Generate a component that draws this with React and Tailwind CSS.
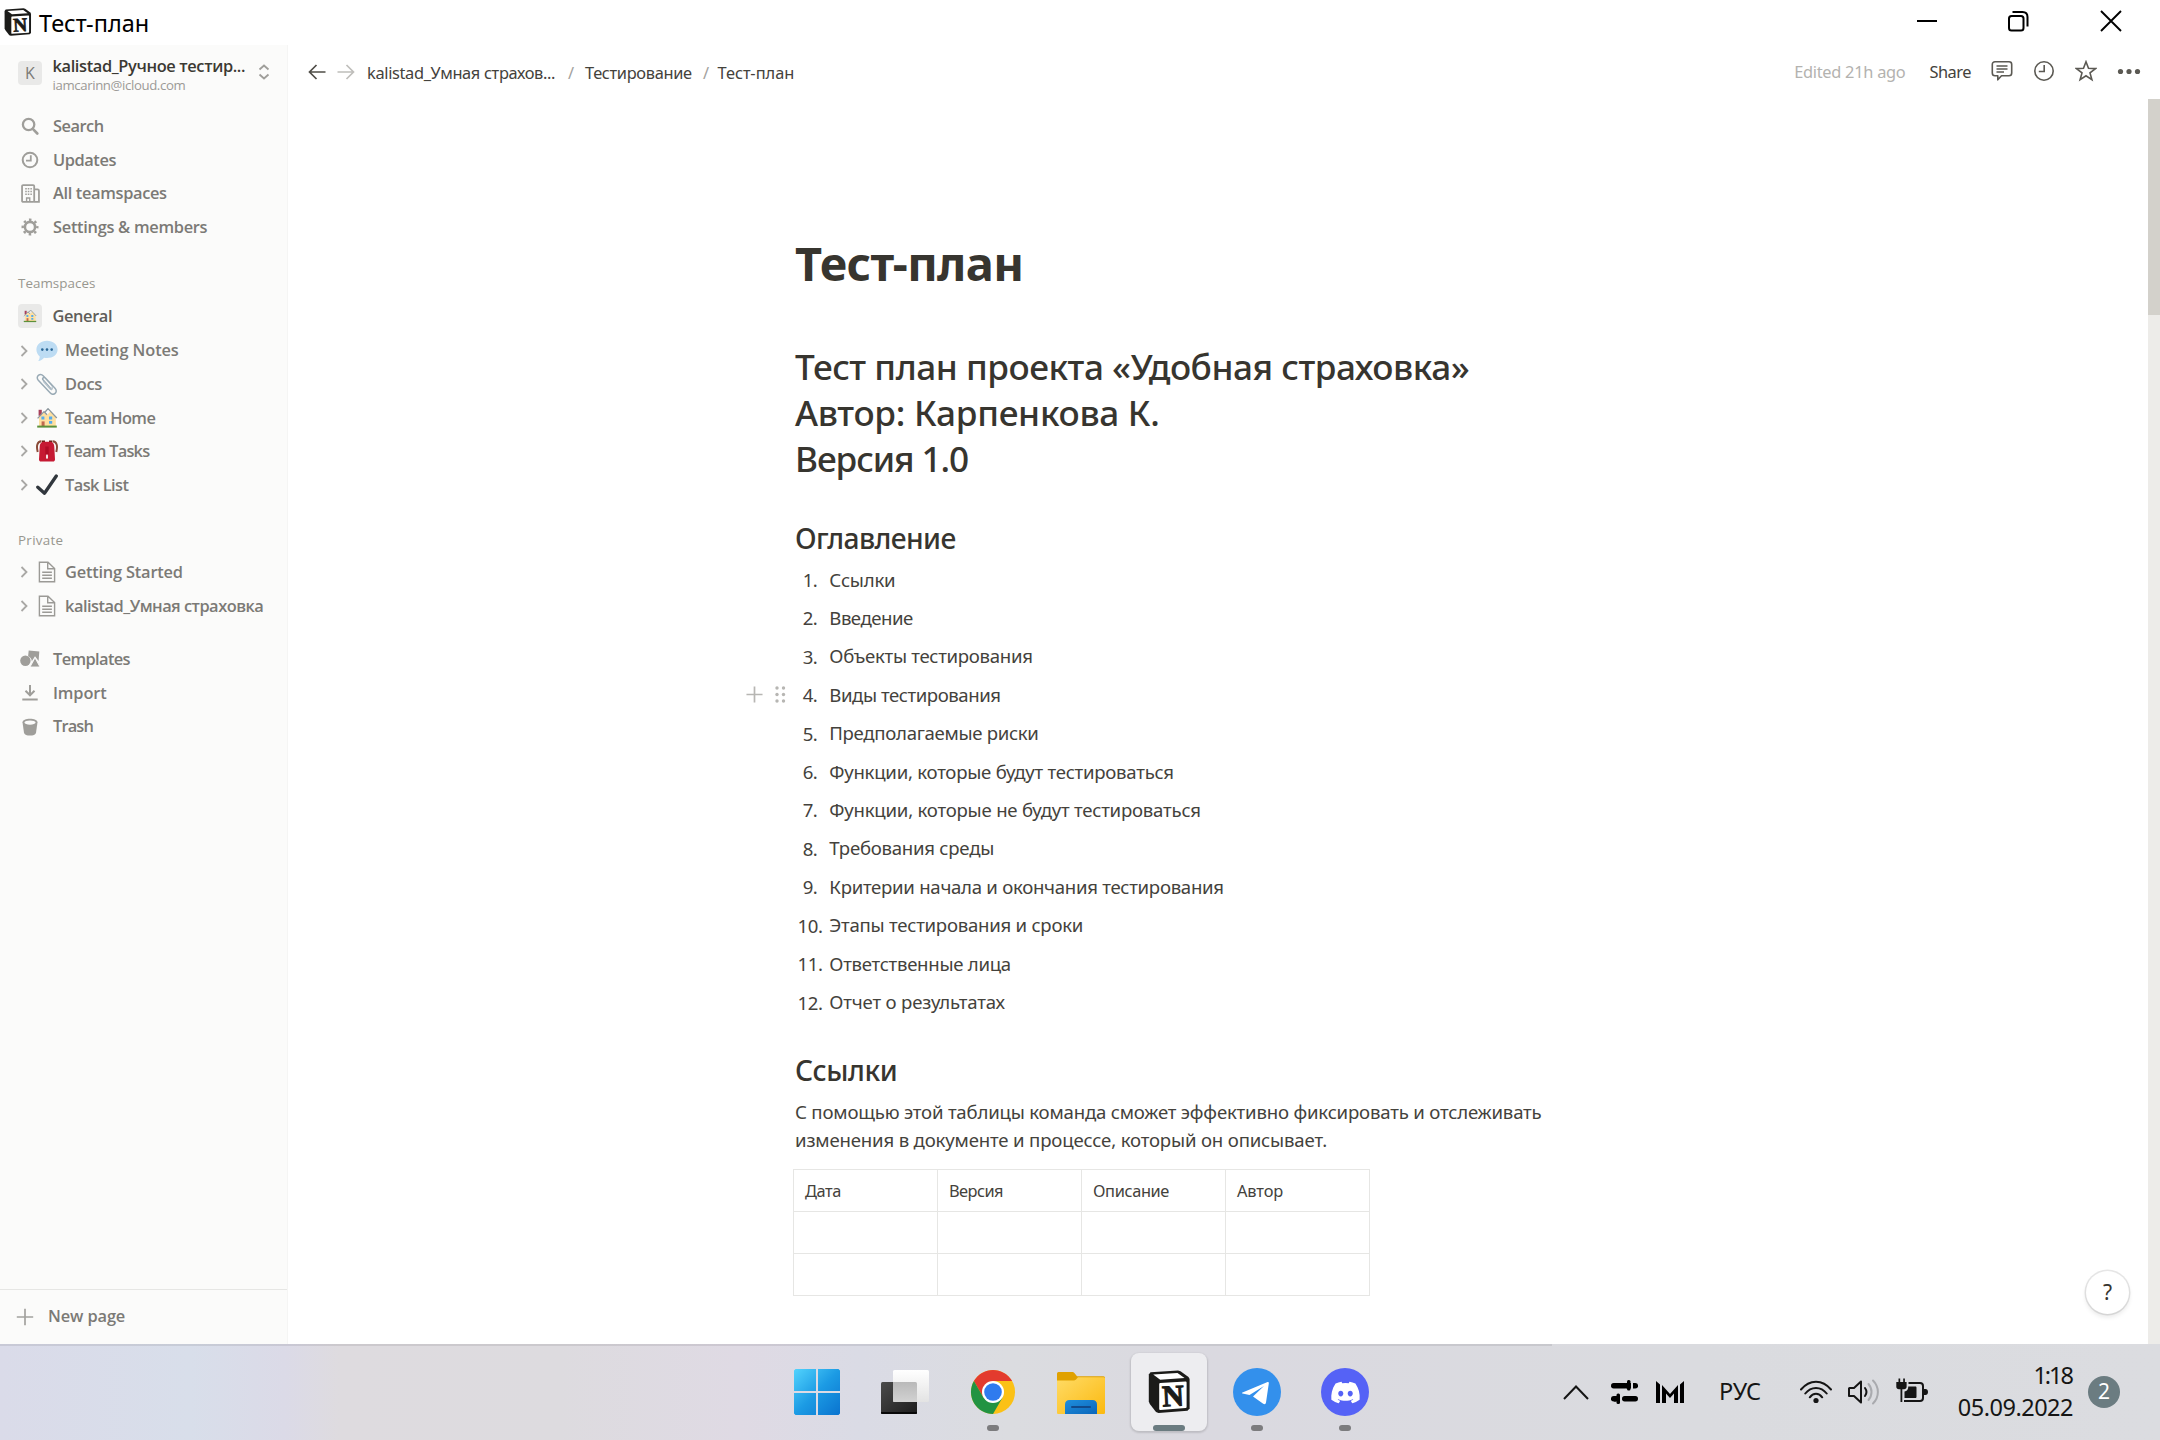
import React from 'react';
import { FaDiscord } from 'react-icons/fa';

function Notion({ className }) {
  return (
    <svg viewBox="0 0 43 44" className={className}>
      <path d="M2.500 2.200L30 .4 32.500 1.200 40.500 7 41.600 9V38.500L39.500 40.700 10.500 43 8 42 1.800 34 .8 31.500V4.500z" fill="#1b1b19" strokeLinejoin="round" />
      <path d="M5.200 4.600L29.500 3 36.500 8 12.200 9.800z" fill="#fff" />
      <path d="M11.200 14.200Q11.200 13.200 12.200 13.100L37.500 11.400Q38.600 11.300 38.600 12.400V37Q38.600 38 37.600 38.100L12.400 39.900Q11.200 40 11.200 38.900z" fill="#fff" />
      <text x="25" y="36" textAnchor="middle" fontFamily="Liberation Serif, serif" fontWeight="700" fontSize="30" fill="#1b1b19" stroke="#1b1b19" strokeWidth="1.100" transform="rotate(-3 25 26)">N</text>
    </svg>
  );
}

function House({ className }) {
  return (
    <svg viewBox="0 0 22 22" className={className}>
      <path d="M2.600 2.800h3.200v6H2.600z" fill="#a8405a" />
      <path d="M3 10.500L8 5l3 3 3.800-4 5 6.500V19H3z" fill="#ffe0a0" />
      <path d="M1.600 11.400L8 4.600l3 3.200M7.600 5h1.500L12 1.600 20.800 11" fill="none" stroke="#8d989e" strokeWidth="1.300" strokeLinejoin="round" />
      <path d="M5.400 9.600h3v3h-3zM13 9.400h3.200v3H13zM13 14h3.200v2.800H13z" fill="#55acee" />
      <path d="M5.600 14.400h3V19h-3z" fill="#c1694f" />
      <path d="M1.200 18.600h19.600v2H1.200z" fill="#5c913b" />
    </svg>
  );
}

const emoji = {
  chat: (
    <svg viewBox="0 0 22 22" className="size-[22px]">
      <path d="M11 .8c6 0 10.600 3.700 10.600 8.700S17 18 11 18c-1 0-2 0-3-.3C6.600 19.600 4.600 20.800 2.200 21c1-1.400 1.500-3 1.500-4.600C1.600 14.700.4 12.300.4 9.500.4 4.500 5 .8 11 .8z" fill="#bddcf3" />
      <circle cx="6.300" cy="9.600" r="1.300" fill="#2a6797" />
      <circle cx="11" cy="9.600" r="1.300" fill="#2a6797" />
      <circle cx="15.700" cy="9.600" r="1.300" fill="#2a6797" />
    </svg>
  ),
  clip: (
    <svg viewBox="0 0 22 22" className="size-[22px]" fill="none" strokeLinecap="round">
      <path d="M15.500 16.500L7 6.800C5.700 5.400 8 3.500 9.400 5l9.800 10.600c3.200 3.600-1.800 7.600-4.900 4.300L2.300 7.200C-.9 3.600 4 -.6 7.400 3L17 13.500" stroke="#99aab5" strokeWidth="1.500" />
      <path d="M7.500 8.500l6.500 7.400c1.300 1.500 3.200-.3 2-1.700" stroke="#b6c3cc" strokeWidth="1.300" />
    </svg>
  ),
  house: <House className="size-[22px]" />,
  pack: (
    <svg viewBox="0 0 22 22" className="size-[22px]">
      <path d="M5.500 1.300C1 1.600.2 6 1.700 12M16.500 1.300c4.500.3 5.300 4.700 3.800 10.700" fill="none" stroke="#8a4b38" strokeWidth="2" />
      <path d="M6 .6h3v4H6zM13 .6h3v4h-3z" fill="#662113" />
      <path d="M8 1.800h6c3 0 4.200 2 4.300 5L19 19.500c0 1.300-.8 2.100-2 2.100H5c-1.200 0-2-.8-2-2.100L3.700 6.800c.1-3 1.300-5 4.300-5z" fill="#c61a33" />
      <path d="M9.300 6.500h3.400v8H9.300z" fill="#a0041e" opacity=".6" />
      <rect x="10" y="14.500" width="2" height="4.300" rx=".8" fill="#f4e4e6" />
    </svg>
  ),
  check: (
    <svg viewBox="0 0 22 22" className="size-[22px]">
      <path d="M1.800 13.200L8.500 19.200 20.300 2" fill="none" stroke="#31373d" strokeWidth="3.300" strokeLinecap="round" strokeLinejoin="round" />
    </svg>
  ),
  page: (
    <svg viewBox="0 0 22 22" className="size-[22px]" fill="none" stroke="#9b9a96" strokeWidth="1.400">
      <path d="M3.400 1.200H12L18.600 7.500V20.800H3.400zM11.700 1.500V7.800H18.300" />
      <path d="M6.200 11.200h9.700M6.200 14.200h9.700M6.200 17.200h9.700" />
    </svg>
  ),
};

const icons = {
  search: (
    <svg viewBox="0 0 18 18" className="size-[18px]" fill="none" stroke="#9f9e9a" strokeWidth="2.300" strokeLinecap="round">
      <circle cx="7.600" cy="7.500" r="5.700" />
      <path d="M11.800 11.900L16.300 16.500" strokeWidth="2.600" />
    </svg>
  ),
  clock: (
    <svg viewBox="0 0 18 18" className="size-[18px]" fill="none" stroke="#9f9e9a" strokeWidth="2">
      <circle cx="9" cy="9" r="7.300" />
      <path d="M9.800 4.300V9.700H5" strokeWidth="1.800" />
    </svg>
  ),
  building: (
    <svg viewBox="0 0 18 18" className="size-[19px]" fill="none" stroke="#9f9e9a" strokeWidth="1.700">
      <rect x="1" y="1" width="11.500" height="16" rx="1" />
      <path d="M12.500 5h3.200c.8 0 1.300.5 1.300 1.300V17h-4.500" />
      <path d="M4 4.600h1.500M6.400 4.600H7.900M8.900 4.600h1.400M4 7.200h1.500M6.400 7.200H7.900M8.900 7.200h1.400M4 9.800h1.500M6.400 9.800H7.900M8.900 9.800h1.400" strokeWidth="1.400" />
      <path d="M5.300 16.500v-3.200h3v3.200" strokeWidth="1.300" />
    </svg>
  ),
  gear: (
    <svg viewBox="0 0 18 18" className="size-[18px]" fill="none" stroke="#9f9e9a">
      <circle cx="9" cy="9" r="5.100" strokeWidth="2.600" />
      <circle cx="9" cy="9" r="7.300" strokeWidth="2.400" strokeDasharray="2.500 3.233" strokeDashoffset="1.250" />
    </svg>
  ),
  templates: (
    <svg viewBox="0 0 20 18" className="h-[18px] w-[20px]" fill="#9f9e9a">
      <path d="M8.700.6L19.300 1.600 18.600 11 15 6.200 11.800 11.300A5.800 5.800 0 0 0 8.100 6.200z" />
      <circle cx="5.400" cy="10.800" r="5.200" />
      <path d="M15 7.800L20 17H10z" stroke="#fbfbfa" strokeWidth=".9" />
    </svg>
  ),
  import: (
    <svg viewBox="0 0 18 18" className="size-[18px]" fill="none" stroke="#9f9e9a" strokeWidth="2">
      <path d="M9 1v10M4.500 6.800L9 11.300l4.500-4.500M1.300 15.600H16.700" />
    </svg>
  ),
  trash: (
    <svg viewBox="0 0 18 18" className="size-[18px]">
      <path d="M1.500 4.300C1.500 2 5 .8 9 .8s7.500 1.200 7.500 3.500L15 14.700C14.700 16.700 12 17.500 9 17.500s-5.700-.8-6-2.800z" fill="#9f9e9a" />
      <ellipse cx="9" cy="4.600" rx="5.600" ry="2.100" fill="#fbfbfa" />
    </svg>
  ),
};

function NavRow({ icon, label, track }) {
  return (
    <div className="flex h-[33.600px] items-center pl-[18px]">
      <span className="flex w-6 justify-center">{icons[icon]}</span>
      <span className={`ml-[11px] text-[16.400px] font-[550] text-[#7b7a76] ${track}`}>{label}</span>
    </div>
  );
}

function PageRow({ icon, label, track }) {
  return (
    <div className="flex h-[33.600px] items-center pl-[20px]">
      <svg viewBox="0 0 8 12" className="h-3 w-2" fill="none" stroke="#a9a8a5" strokeWidth="1.800">
        <path d="M1.500 1l5 5-5 5" />
      </svg>
      <span className="ml-2">{emoji[icon]}</span>
      <span className={`ml-[7px] whitespace-nowrap text-[16.400px] font-[550] text-[#7b7a76] ${track}`}>{label}</span>
    </div>
  );
}

function Sidebar() {
  return (
    <aside className="flex w-[288px] shrink-0 flex-col border-r border-[#f5f5f4] bg-[#fbfbfa] font-['Open_Sans',sans-serif]">
      <div className="flex h-[64.500px] items-start pl-[18px]">
        <span className="mt-4 flex size-6 items-center justify-center rounded-[4px] bg-[#e9e9e8] text-[16px] font-medium text-[#7b7a76]">K</span>
        <div className="ml-[10.500px] mt-[10px] w-[196px]">
          <div className="h-[22px] whitespace-nowrap text-[16.400px] font-semibold leading-[22px] tracking-[-0.37px] text-[#3b3933]">kalistad_Ручное тестир...</div>
          <div className="text-[13.200px] leading-[17px] tracking-[-0.37px] text-[#9b9a97]">iamcarinn@icloud.com</div>
        </div>
        <svg viewBox="0 0 12 16" className="ml-[9.500px] mt-[19px] h-4 w-3" fill="none" stroke="#9f9e9a" strokeWidth="1.800">
          <path d="M1.500 5.500L6 1.500l4.500 4M1.500 10.500L6 14.500l4.500-4" />
        </svg>
      </div>
      <NavRow icon="search" label="Search" track="tracking-[-0.5px]" />
      <NavRow icon="clock" label="Updates" track="tracking-[-0.43px]" />
      <NavRow icon="building" label="All teamspaces" track="tracking-[-0.35px]" />
      <NavRow icon="gear" label="Settings & members" track="tracking-[-0.29px]" />
      <div className="mt-[23px] flex h-[31.500px] items-center pl-[18px] text-[13.400px] font-medium tracking-[0.03px] text-[#98978f]">Teamspaces</div>
      <div className="flex h-[35.500px] items-start pl-[18px] pt-[5.500px]">
        <span className="flex size-6 items-center justify-center rounded-[4px] bg-[#e9e9e8]"><House className="size-[14px]" /></span>
        <span className="ml-[10.500px] text-[16.400px] font-[550] leading-6 tracking-[-0.38px] text-[#5f5e59]">General</span>
      </div>
      <PageRow icon="chat" label="Meeting Notes" track="tracking-[-0.15px]" />
      <PageRow icon="clip" label="Docs" track="tracking-[-0.3px]" />
      <PageRow icon="house" label="Team Home" track="tracking-[-0.58px]" />
      <PageRow icon="pack" label="Team Tasks" track="tracking-[-0.78px]" />
      <PageRow icon="check" label="Task List" track="tracking-[-0.55px]" />
      <div className="mt-[22px] flex h-[31.600px] items-center pl-[18px] text-[13.400px] font-medium tracking-[0.3px] text-[#98978f]">Private</div>
      <PageRow icon="page" label="Getting Started" track="tracking-[-0.2px]" />
      <PageRow icon="page" label="kalistad_Умная страховка" track="tracking-[-0.5px]" />
      <div className="h-5" />
      <NavRow icon="templates" label="Templates" track="tracking-[-0.62px]" />
      <NavRow icon="import" label="Import" track="tracking-[-0.15px]" />
      <NavRow icon="trash" label="Trash" track="tracking-[-0.85px]" />
      <div className="mt-auto flex h-[55px] items-center border-t border-[#e6e6e4] pb-px pl-[16px]">
        <svg viewBox="0 0 18 18" className="size-[18px]" stroke="#a3a29e" strokeWidth="1.700">
          <path d="M9 .8v16.400M.8 9h16.400" />
        </svg>
        <span className="ml-[14px] text-[16.400px] font-[550] tracking-[-0.12px] text-[#7b7a76]">New page</span>
      </div>
    </aside>
  );
}

function TitleBar() {
  return (
    <header className="flex h-[45px] shrink-0 items-start bg-white">
      <Notion className="ml-[3.500px] mt-[7.500px] h-[28.500px] w-7" />
      <span className="ml-[7.500px] mt-[7px] text-[23.500px] leading-8 text-black">Тест-план</span>
      <div className="ml-auto mr-[38px] mt-[10px] flex">
        <svg viewBox="0 0 22 22" className="mr-[69px] size-[22px]" stroke="#000" strokeWidth="2"><path d="M1 11h20" /></svg>
        <svg viewBox="0 0 22 22" className="mr-[71px] size-[22px]" fill="none" stroke="#000" strokeWidth="2">
          <rect x="2" y="6" width="14.500" height="14.500" rx="2.500" />
          <path d="M5.500 2H15.500C18.500 2 20.500 4 20.500 7v9.500" />
        </svg>
        <svg viewBox="0 0 22 22" className="size-[22px]" stroke="#000" strokeWidth="1.900"><path d="M1 1l20 20M21 1L1 21" /></svg>
      </div>
    </header>
  );
}

function TopBar() {
  return (
    <div className="flex h-[54px] shrink-0 items-center pl-[20px] text-[16.400px] text-[#44423c]">
      <svg viewBox="0 0 18 16" className="h-4 w-[18px]" fill="none" stroke="#4f4d47" strokeWidth="1.700"><path d="M17.500 8H1.500M8.500 1L1.500 8l7 7" /></svg>
      <svg viewBox="0 0 18 16" className="ml-[11px] h-4 w-[18px]" fill="none" stroke="#bfbebb" strokeWidth="1.700"><path d="M.5 8h16M9.500 1l7 7-7 7" /></svg>
      <span className="ml-[12px] w-[201px] whitespace-nowrap pt-0.5 tracking-[-0.35px]">kalistad_Умная страхов...</span>
      <span className="w-[17px] pt-0.5 text-[#a3a29e]">/</span>
      <span className="w-[118px] pt-0.5 tracking-[-0.33px]">Тестирование</span>
      <span className="w-[14.500px] pt-0.5 text-[#a3a29e]">/</span>
      <span className="pt-0.5">Тест-план</span>
      <span className="ml-auto tracking-[-0.28px] text-[#b3b2af]">Edited 21h ago</span>
      <span className="ml-[24px] tracking-[-0.5px]">Share</span>
      <div className="ml-[20px] mr-[19px] flex items-center gap-5 pb-0.5">
        <svg viewBox="0 0 22 22" className="size-[22px]" fill="none" stroke="#5b5953" strokeWidth="1.600">
          <path d="M4 1.800h14c1.600 0 2.700 1 2.700 2.600v8.700c0 1.600-1.100 2.700-2.700 2.700H10.500L6.800 19.800V15.800H4c-1.600 0-2.700-1.100-2.700-2.700V4.400C1.300 2.800 2.400 1.800 4 1.800z" strokeLinejoin="round" />
          <path d="M5.500 6h11M5.500 9h11M5.500 12h7.500" strokeWidth="1.300" />
        </svg>
        <svg viewBox="0 0 22 22" className="size-[22px]" fill="none" stroke="#5b5953" strokeWidth="1.600">
          <circle cx="11" cy="11" r="9.200" />
          <path d="M11.200 5V11.500H5.800" />
        </svg>
        <svg viewBox="0 0 22 22" className="size-[22px]" fill="none" stroke="#5b5953" strokeWidth="1.600">
          <path d="M11 1.800l2.500 6.500 7 .3-5.500 4.300 1.900 6.800L11 15.800l-5.900 3.900L7 12.900 1.500 8.600l7-.3z" />
        </svg>
        <svg viewBox="0 0 24 22" className="h-[22px] w-6" fill="#5b5953">
          <circle cx="3.500" cy="11.500" r="2.600" /><circle cx="12" cy="11.500" r="2.600" /><circle cx="20.500" cy="11.500" r="2.600" />
        </svg>
      </div>
    </div>
  );
}

const items = [
  ['Ссылки', 'tracking-[-0.25px]'],
  ['Введение', 'tracking-[-0.5px]'],
  ['Объекты тестирования', 'tracking-[-0.3px]'],
  ['Виды тестирования', 'tracking-[-0.44px]'],
  ['Предполагаемые риски', 'tracking-[-0.31px]'],
  ['Функции, которые будут тестироваться', 'tracking-[-0.25px]'],
  ['Функции, которые не будут тестироваться', 'tracking-[-0.22px]'],
  ['Требования среды', 'tracking-[-0.25px]'],
  ['Критерии начала и окончания тестирования', 'tracking-[-0.28px]'],
  ['Этапы тестирования и сроки', 'tracking-[-0.25px]'],
  ['Ответственные лица', 'tracking-[-0.28px]'],
  ['Отчет о результатах', 'tracking-[-0.18px]'],
];

const columns = [
  ['Дата', 'tracking-[-0.41px]'],
  ['Версия', 'tracking-[-0.58px]'],
  ['Описание', 'tracking-[-0.38px]'],
  ['Автор', 'tracking-[-0.12px]'],
];

function Document() {
  return (
    <article className="flex-1 pl-[507px] pt-[134px] text-[#37352f]">
      <h1 className="h-[60px] text-[47px] font-bold leading-[60px] tracking-[-0.6px]">Тест-план</h1>
      <div className="mt-[49.500px] text-[35.200px] font-[550] leading-[46px]">
        <div className="tracking-[-0.47px]">Тест план проекта «Удобная страховка»</div>
        <div className="tracking-[-0.27px]">Автор: Карпенкова К.</div>
        <div className="tracking-[-1.1px]">Версия 1.0</div>
      </div>
      <h2 className="mt-[37px] text-[28.200px] font-[550] leading-[40px] tracking-[-0.58px]">Оглавление</h2>
      <ol className="mt-[2.800px] text-[18.600px] text-[#44423c]">
        {items.map(([text, track], i) => (
          <li key={text} className="relative flex h-[38.420px] items-center">
            {i === 3 && (
              <span className="absolute -left-[49px] top-[10.500px] flex gap-[12px]">
                <svg viewBox="0 0 18 18" className="size-[17px]" stroke="#b7b6b3" strokeWidth="1.800"><path d="M9 .5v17M.5 9h17" /></svg>
                <svg viewBox="0 0 11 17" className="h-[17px] w-[11px]" fill="#b7b6b3">
                  <circle cx="2" cy="2" r="1.700" /><circle cx="8.500" cy="2" r="1.700" /><circle cx="2" cy="8.500" r="1.700" /><circle cx="8.500" cy="8.500" r="1.700" /><circle cx="2" cy="15" r="1.700" /><circle cx="8.500" cy="15" r="1.700" />
                </svg>
              </span>
            )}
            <span className="w-[30px] pt-px text-center tracking-[-0.5px]">{i + 1}.</span>
            <span className={`ml-[4.300px] ${track}`}>{text}</span>
          </li>
        ))}
      </ol>
      <h2 className="mt-[29px] text-[28.200px] font-[550] leading-[40px] tracking-[-0.45px]">Ссылки</h2>
      <div className="mt-[7.500px] text-[18.600px] leading-[28.200px] text-[#44423c]">
        <div className="tracking-[-0.19px]">С помощью этой таблицы команда сможет эффективно фиксировать и отслеживать</div>
        <div className="tracking-[-0.17px]">изменения в документе и процессе, который он описывает.</div>
      </div>
      <div className="-ml-[2px] mt-[14.500px] grid w-[577px] grid-cols-[144px_144px_144px_144px] border-l border-t border-[#e6e6e4] text-[16.400px] text-[#44423c]">
        {[0, 1, 2].map((row) =>
          columns.map(([name, track]) => (
            <div key={name + row} className={`flex h-[42px] items-center border-b border-r border-[#e6e6e4] pl-[11px] pt-[3px] ${track}`}>
              {row === 0 ? name : ''}
            </div>
          ))
        )}
      </div>
    </article>
  );
}

function Chrome() {
  return (
    <svg viewBox="0 0 48 48" className="size-[46px]">
      <circle cx="24" cy="24" r="23" fill="#fbc116" />
      <path d="M4.100 12.500A23 23 0 0 1 43.900 12.500H24L14 29.700z" fill="#e33b2e" />
      <path d="M4.100 12.500L14 29.700 34 29.700 24 47A23 23 0 0 1 4.100 12.500z" fill="#229342" />
      <circle cx="24" cy="24" r="11.500" fill="#fff" />
      <circle cx="24" cy="24" r="9.200" fill="#2f7bee" />
    </svg>
  );
}

const apps = [
  {
    name: 'start',
    icon: (
      <svg viewBox="0 0 46 46" className="size-[46px]">
        <defs><linearGradient id="win" x1="0" y1="0" x2="46" y2="46" gradientUnits="userSpaceOnUse"><stop stopColor="#52d3fd" /><stop offset=".5" stopColor="#1c9be4" /><stop offset="1" stopColor="#0a73cf" /></linearGradient></defs>
        <path d="M1.500 0H22V22H0V1.500zM24 0H44.500L46 1.500V22H24zM0 24H22V46H1.500L0 44.500zM24 24H46V44.500L44.500 46H24z" fill="url(#win)" />
      </svg>
    ),
  },
  {
    name: 'taskview',
    icon: (
      <svg viewBox="0 0 48 48" className="size-[48px]">
        <defs>
          <linearGradient id="tv1" x1="0" y1="0" x2="1" y2="1"><stop stopColor="#4b4b4b" /><stop offset="1" stopColor="#1c1c1c" /></linearGradient>
          <linearGradient id="tv2" x1="0" y1="0" x2="0" y2="1"><stop stopColor="#fff" /><stop offset="1" stopColor="#e3e3e3" /></linearGradient>
          <linearGradient id="tv3" x1="0" y1="0" x2="0" y2="1"><stop stopColor="#b9b9b9" /><stop offset="1" stopColor="#d2d2d2" /></linearGradient>
        </defs>
        <rect x="0" y="14" width="36" height="32" rx="1.500" fill="url(#tv1)" />
        <path d="M0 44h36v1a1 1 0 0 1-1 1H1a1 1 0 0 1-1-1z" fill="#080808" />
        <rect x="12" y="2" width="36" height="32" rx="1.500" fill="url(#tv2)" />
        <path d="M12 14H34.500a1.500 1.500 0 0 1 1.500 1.500V34H13.500a1.500 1.500 0 0 1-1.500-1.500z" fill="url(#tv3)" />
      </svg>
    ),
  },
  { name: 'chrome', icon: <Chrome />, running: true },
  {
    name: 'explorer',
    icon: (
      <svg viewBox="0 0 48 48" className="size-[48px]">
        <defs>
          <linearGradient id="fo" x1="0" y1="0" x2="1" y2="1"><stop stopColor="#ffdb66" /><stop offset="1" stopColor="#fbb90f" /></linearGradient>
          <linearGradient id="fb" x1="0" y1="0" x2="1" y2="1"><stop stopColor="#1f8fdd" /><stop offset="1" stopColor="#0b66bb" /></linearGradient>
        </defs>
        <path d="M0 5.500A1.500 1.500 0 0 1 1.500 4H15c1.500 0 2.200.6 3 1.700L20 8.200H46.500A1.500 1.500 0 0 1 48 9.700V20H0z" fill="#e0a100" />
        <path d="M0 12.500L16 12.500c1.500 0 2.500-.4 3.500-1.500L21 9.200H46.500c1 0 1.500.5 1.500 1.500V44.500c0 1-.6 1.500-1.500 1.500H1.500C.5 46 0 45.500 0 44.500z" fill="url(#fo)" />
        <path d="M8 46V36.500C8 33.500 9.700 32 12.500 32h23c2.800 0 4.500 1.500 4.500 4.500V46z" fill="url(#fb)" />
        <rect x="14" y="38" width="20" height="2" rx="1" fill="#114a8b" />
      </svg>
    ),
  },
  { name: 'notion', icon: <Notion className="h-[44px] w-[43px]" />, active: true },
  {
    name: 'telegram',
    icon: (
      <svg viewBox="0 0 48 48" className="size-[48px]">
        <circle cx="24" cy="24" r="24" fill="#3390ec" />
        <path d="M9.500 24.500L34 14.200c1.400-.6 2 .1 1.800 1.400L33 34.500c-.3 1.800-1.500 2-2.800 1.200L20 28.500 31 18 16.500 27 9.500 25.500c-.8-.2-.8-.7 0-1z" fill="#fff" />
      </svg>
    ),
    running: true,
  },
  {
    name: 'discord',
    icon: <span className="flex size-12 items-center justify-center rounded-full bg-[#5562f6]"><FaDiscord className="size-[31px] text-white" /></span>,
    running: true,
  },
];

function Taskbar() {
  return (
    <footer className="flex h-24 shrink-0 flex-col bg-[linear-gradient(90deg,#dadbe9_0px,#d8deea_190px,#dbdae7_285px,#dedbdf_340px,#dddbdf_560px,#dfdae4_740px,#dadbe5_860px,#dbdce0_1010px,#dad9e0_1200px,#dadbdf_1700px,#dbdce0_2160px)]">
      <div className="h-0.5 w-[1552px] shrink-0 bg-black/8" />
      <div className="flex flex-1">
        <div className="flex pl-[773px]">
          {apps.map((app) => (
            <div key={app.name} className="flex w-[88px] justify-center pt-[7px]">
              <div className={`relative flex h-[78px] w-[76px] items-center justify-center rounded-lg ${app.active ? 'bg-[#ededf0] shadow-[0_1px_2px_1px_rgba(0,0,0,0.13)]' : ''}`}>
                {app.icon}
                {app.active && <span className="absolute bottom-0 h-1.5 w-8 rounded-full bg-[#6b7c81]" />}
                {app.running && <span className="absolute bottom-0 h-1.5 w-3 rounded-full bg-[#7c7c7e]" />}
              </div>
            </div>
          ))}
        </div>
        <div className="ml-auto flex items-center pb-0.5 pr-10 text-[#151515]">
          <svg viewBox="0 0 26 15" className="h-[15px] w-[26px]" fill="none" stroke="#151515" strokeWidth="2"><path d="M1 14L13 1.500 25 14" /></svg>
          <svg viewBox="0 0 27 24" className="ml-[22px] h-6 w-[27px]" fill="#000">
            <rect x="0" y="3" width="17" height="5.500" rx="2.700" /><rect x="16" y="0" width="3.500" height="10.500" rx="1.500" /><rect x="15" y="3" width="5" height="5.500" /><path d="M22 3h2.300a2.700 2.700 0 0 1 0 5.500H22z" />
            <path d="M2.700 16H5v5.500H2.700a2.700 2.700 0 0 1 0-5.500z" /><rect x="5.500" y="13.500" width="3.500" height="10.500" rx="1.500" /><rect x="3" y="16" width="6" height="5.500" /><rect x="11" y="16" width="16" height="5.500" rx="2.700" />
          </svg>
          <svg viewBox="0 0 28 22" className="ml-[18px] h-[22px] w-7" fill="#000">
            <path d="M0 0L4 3.500V22H0zM28 0L24 3.500V22H28zM6 4L14 13 22 4V22H18V12.500L14 17 10 12.500V22H6z" />
          </svg>
          <span className="ml-[35px] text-[23.500px] tracking-[-0.14px]">РУС</span>
          <svg viewBox="0 0 32 24" className="ml-[39px] h-6 w-8" fill="none" stroke="#151515" strokeWidth="2" strokeLinecap="round">
            <path d="M1 9.500C9.500-1 22.500-1 31 9.500M5.300 13.500C11 6 21 6 26.700 13.500M9.800 17.300C13.200 12.600 18.800 12.600 22.200 17.300" />
            <circle cx="16" cy="20.500" r="2.600" fill="#151515" stroke="none" />
          </svg>
          <svg viewBox="0 0 32 26" className="ml-4 h-[26px] w-8" fill="none" stroke="#151515" strokeWidth="2" strokeLinecap="round" strokeLinejoin="round">
            <path d="M1 9.500V17H6L13 23.500V2.500L6 9H1.500z" />
            <path d="M17 9c1.700 2.300 1.700 5.700 0 8" />
            <path d="M20.500 5c4 4.700 4 11.300 0 16M25 1.500c6.500 6.500 6.500 16.500 0 23" stroke="#a9aaae" />
          </svg>
          <svg viewBox="0 0 32 24" className="-mt-1 ml-4 h-6 w-8" fill="#151515">
            <path d="M.3 4H2.500V.4h1.700V4h3V.4H8.900V4h1.700v5c0 1.200-1 2-2.500 2.300H3C1.300 11 .3 10.200.3 9zM4.500 10H6.300V24H4.500z" />
            <path d="M12.500 5H24c2 0 3 1 3 3v12c0 2-1 3-3 3H8" fill="none" stroke="#151515" strokeWidth="2" />
            <path d="M12.300 8.500H19.500c.5 0 1 .5 1 1v9.500c0 .5-.5 1-1 1H8.500v-6.500c2.500-.5 3.800-2 3.800-5zM28 11h1.500c1.500 0 2.500 1 2.500 3s-1 3-2.500 3H28z" />
          </svg>
          <div className="ml-[29px] w-[116px] pb-px text-right text-[23.500px] leading-[31.500px]">
            <div className="pr-px tracking-[-2px]">1:18</div>
            <div className="tracking-[-0.49px]">05.09.2022</div>
          </div>
          <span className="ml-[15px] flex size-8 items-center justify-center rounded-full bg-[#6b7c81] pb-px text-[21px] text-white">2</span>
        </div>
      </div>
    </footer>
  );
}

export default function App() {
  return (
    <div className="flex h-[1440px] w-[2160px] flex-col overflow-hidden bg-white font-['Noto_Sans',sans-serif]">
      <TitleBar />
      <div className="flex min-h-0 flex-1">
        <Sidebar />
        <main className="relative flex min-w-0 flex-1 flex-col">
          <TopBar />
          <div className="flex min-h-0 flex-1">
            <Document />
            <div className="w-3 bg-[#edece9]"><div className="h-[216px] bg-[#d3d1cb]" /></div>
          </div>
          <button className="absolute bottom-[30px] right-[31px] flex size-[43px] items-center justify-center rounded-full bg-white text-[21px] text-[#37352f] shadow-[0_0_0_1.500px_rgba(15,15,15,0.1),0_3px_5px_rgba(15,15,15,0.1)]">?</button>
        </main>
      </div>
      <Taskbar />
    </div>
  );
}
